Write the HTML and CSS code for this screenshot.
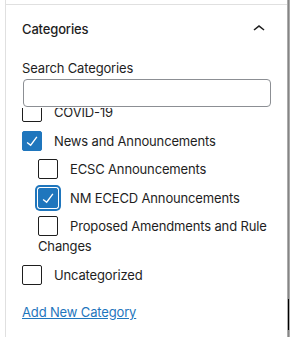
FILE: index.html
```html
<!DOCTYPE html>
<html>
	<head>
		<link rel="stylesheet" href="styles.css">
	</head>
	<body>
		<div class="sidebar">
			<div class="panel">
				<div class="panel-title">
					<span>Categories</span>
					<svg class="chevron" width="24" height="24" viewBox="0 0 24 24"><path d="M6.5 12.4L12 8l5.5 4.4-.9 1.2L12 10l-4.5 3.6-1-1.2z"/></svg>
				</div>
				<div class="panel-body">
					<label class="search-label" for="search">Search Categories</label>
					<input class="search-input" id="search" type="text">
					<div class="term-list">
						<div class="term-scroll">
							<div class="term">
								<span class="check"></span>COVID-19
							</div>
							<div class="term">
								<span class="check checked"><svg viewBox="0 0 24 24"><path d="M16.7 7.1l-6.3 8.5-3.3-2.5-.9 1.2 4.5 3.4L17.9 8z"/></svg></span>News and Announcements
								<div class="term-children">
									<div class="term">
										<span class="check"></span>ECSC Announcements
									</div>
									<div class="term">
										<span class="check checked focused"><svg viewBox="0 0 24 24"><path d="M16.7 7.1l-6.3 8.5-3.3-2.5-.9 1.2 4.5 3.4L17.9 8z"/></svg></span>NM ECECD Announcements
									</div>
									<div class="term">
										<span class="check"></span>Proposed Amendments and Rule Changes
									</div>
								</div>
							</div>
							<div class="term">
								<span class="check"></span>Uncategorized
							</div>
						</div>
					</div>
					<a class="add-link" href="#">Add New Category</a>
				</div>
			</div>
		</div>
		<div class="scrollbar"><div class="scroll-line"></div></div>
	</body>
</html>
```
FILE: styles.css
```css
body {
	margin: 0;
	height: 337px;
	display: flex;
	background: #fff;
	font-family: 'Inter', 'Noto Sans', sans-serif;
	font-size: 13px;
	letter-spacing: -0.15px;
	color: #1e1e1e;
	overflow: hidden;
}

.sidebar {
	flex: 1;
	margin-left: 5px;
	padding-top: 4px;
	border-left: 1px solid #e0e0e0;
}

.panel {
	border-top: 1px solid #e0e0e0;
}

.panel-title {
	height: 48px;
	padding: 0 16px;
	display: flex;
	align-items: center;
	justify-content: space-between;
	font-weight: 500;
}

.chevron {
	fill: #1e1e1e;
	margin-right: 0.5px;
}

.panel-body {
	padding: 0 16px;
}

.search-label {
	display: block;
	margin-top: 7px;
	line-height: 16px;
}

.search-input {
	display: block;
	box-sizing: border-box;
	width: 248px;
	height: 28px;
	margin: 3px 0 0 1px;
	border: 1px solid #8c8f94;
	border-radius: 4px;
	font: inherit;
}

.term-list {
	height: 184px;
	overflow: hidden;
	margin-top: 1px;
}

.term-scroll {
	margin-top: -6px;
}

.term {
	line-height: 20px;
	margin-bottom: 8.5px;
}

.term-children {
	margin-top: 8.5px;
	margin-left: 16px;
}

.term-children .term:last-child {
	margin-bottom: 0;
}

.check {
	display: inline-block;
	box-sizing: border-box;
	width: 20px;
	height: 20px;
	margin-right: 12px;
	vertical-align: top;
	border: 1px solid #1e1e1e;
	border-radius: 2px;
	background: #fff;
}

.check.checked {
	background: #1f76bd;
	border-color: #1f76bd;
}

.check svg {
	display: block;
	width: 22px;
	height: 22px;
	margin: -2px 0 0 -2px;
	fill: #fff;
}

.check.focused {
	box-shadow: 0 0 0 1px #fff, 0 0 0 3px #1f76bd;
}

.add-link {
	display: inline-block;
	margin-top: 12px;
	line-height: 16px;
	color: #1f76bd;
}

.scrollbar {
	width: 4px;
	background: #acacac;
}

.scroll-line {
	width: 1px;
	height: 100%;
	margin-left: 1px;
	background: linear-gradient(#858585 299px, #000 299px, #000 330px, #858585 330px);
}
```
